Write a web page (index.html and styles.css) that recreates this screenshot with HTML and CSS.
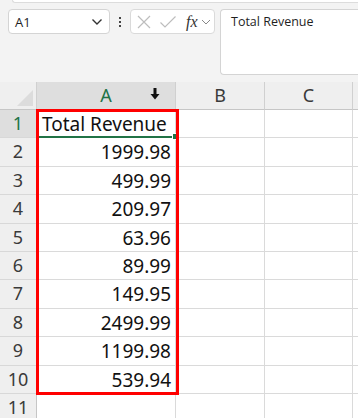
FILE: index.html
```html
<!DOCTYPE html>
<html lang="en">
<head>
    <meta charset="UTF-8" />
    <title>Sheet</title>
    <link rel="stylesheet" href="styles.css">
</head>
<body>

<div class="ribbon-edge"></div>

<div class="formula-bar">
    <div class="name-box">
        <span>A1</span>
        <svg width="12" height="8" viewBox="0 0 12 8"><path d="M1.5 1.5 L6 6 L10.5 1.5" fill="none" stroke="#333" stroke-width="1.4"/></svg>
    </div>
    <div class="dots"><i></i><i></i><i></i></div>
    <div class="fx-box">
        <svg width="16" height="16" viewBox="0 0 16 16"><path d="M2 2 L14 14 M14 2 L2 14" stroke="#bdbdbd" stroke-width="1.2"/></svg>
        <svg width="18" height="16" viewBox="0 0 18 16"><path d="M1.5 8.5 L6 13 L16.5 2.5" fill="none" stroke="#bdbdbd" stroke-width="1.2"/></svg>
        <span class="fx">fx</span>
        <svg width="10" height="6" viewBox="0 0 10 6"><path d="M1 1 L5 5 L9 1" fill="none" stroke="#888" stroke-width="1"/></svg>
    </div>
    <div class="formula-input">Total Revenue</div>
</div>

<div class="sheet">
    <div class="grid">
        <div class="corner"></div>
        <div class="col-head selected">A
            <svg class="col-arrow" width="10" height="12" viewBox="0 0 10 12"><path d="M3.5 0 H6.5 V6 H9.5 L5 11.5 L0.5 6 H3.5 Z" fill="#111"/></svg>
        </div>
        <div class="col-head">B</div>
        <div class="col-head">C</div>
        <div class="col-head tail"></div>
    </div>
    <div class="grid rows" id="rows"></div>
    <div class="selection"></div>
</div>

<script>
    const values = ["Total Revenue", "1999.98", "499.99", "209.97", "63.96", "89.99", "149.95", "2499.99", "1199.98", "539.94", ""];
    const rows = document.getElementById("rows");

    values.forEach((val, i) => {
        const head = document.createElement("div");
        head.className = "row-head" + (i === 0 ? " selected" : "");
        head.textContent = i + 1;
        rows.appendChild(head);

        const a = document.createElement("div");
        a.className = "cell" + (i === 0 ? " active text" : " num");
        a.textContent = val;
        rows.appendChild(a);

        for (let k = 0; k < 3; k++) {
            const c = document.createElement("div");
            c.className = "cell" + (k === 2 ? " tail" : "");
            rows.appendChild(c);
        }
    });
</script>

</body>
</html>
```

FILE: styles.css
```css
body {
    margin: 0;
    width: 358px;
    height: 418px;
    overflow: hidden;
    background: #f3f3f3;
    font-family: "Open Sans", "Noto Sans", sans-serif;
    position: relative;
}

.ribbon-edge {
    margin-left: 12px;
    height: 2px;
    background: #fff;
    border-bottom: 1px solid #dcdcdc;
    border-left: 1px solid #dcdcdc;
    border-bottom-left-radius: 4px;
}

.formula-bar {
    display: flex;
    align-items: flex-start;
    padding: 6px 0 0 8px;
    height: 74px;
    box-sizing: border-box;
}

.name-box {
    width: 102px;
    height: 25px;
    box-sizing: border-box;
    background: #fff;
    border: 1px solid #d4d4d4;
    border-radius: 4px;
    display: flex;
    align-items: center;
    justify-content: space-between;
    padding: 0 6px 0 6px;
    font-size: 13px;
    color: #1f1f1f;
}

.dots {
    width: 20px;
    height: 25px;
    display: flex;
    flex-direction: column;
    align-items: center;
    justify-content: center;
    gap: 2px;
}
.dots i {
    width: 2px;
    height: 2px;
    background: #444;
}

.fx-box {
    width: 85px;
    height: 25px;
    box-sizing: border-box;
    background: #fff;
    border: 1px solid #dadada;
    border-radius: 4px;
    display: flex;
    align-items: center;
    gap: 7px;
    padding-left: 5px;
}
.fx {
    font-family: "Liberation Serif", serif;
    font-style: italic;
    font-size: 16px;
    color: #333;
    margin-left: 2px;
    margin-right: -4px;
}

.formula-input {
    margin-left: 5px;
    flex: 1;
    height: 66px;
    box-sizing: border-box;
    background: #fff;
    border: 1px solid #d4d4d4;
    border-right: none;
    border-radius: 4px 0 0 4px;
    padding: 3px 10px;
    font-size: 12.5px;
    color: #1f1f1f;
}

.sheet {
    position: relative;
    margin-top: 5px;
    font-family: "Noto Sans", sans-serif;
}

.grid {
    display: grid;
    grid-template-columns: 37px 139px 89px 88px 5px;
}
.grid.rows {
    grid-auto-rows: 28.4px;
    background: #fff;
}

.corner {
    height: 28px;
    background: #efefef;
    border-right: 1px solid #d0d0d0;
    border-bottom: 1px solid #c6c6c6;
    box-sizing: border-box;
    position: relative;
}
.corner::after {
    content: "";
    position: absolute;
    right: 3px;
    bottom: 3px;
    border-left: 16px solid transparent;
    border-bottom: 16px solid #dcdcdc;
}

.col-head {
    height: 28px;
    box-sizing: border-box;
    background: #efefef;
    border-right: 1px solid #d0d0d0;
    border-bottom: 1px solid #c6c6c6;
    text-align: center;
    font-size: 18px;
    line-height: 27px;
    color: #3a3a3a;
    position: relative;
}
.col-head.selected {
    background: #dedede;
    color: #217346;
}
.col-head.tail {
    border-right: none;
}
.col-arrow {
    position: absolute;
    top: 6px;
    right: 15px;
}

.row-head {
    box-sizing: border-box;
    background: #efefef;
    border-right: 1px solid #c6c6c6;
    border-bottom: 1px solid #d8d8d8;
    text-align: center;
    font-size: 18px;
    line-height: 27px;
    color: #3a3a3a;
}
.row-head.selected {
    background: #dedede;
    color: #217346;
}

.cell {
    box-sizing: border-box;
    border-right: 1px solid #dadada;
    border-bottom: 1px solid #dadada;
    font-size: 19px;
    line-height: 29px;
    color: #111;
    white-space: nowrap;
}
.cell.tail {
    border-right: none;
}
.cell.num {
    text-align: right;
    padding-right: 4px;
}
.cell.text {
    padding-left: 5px;
}
.cell.active {
    position: relative;
    border-bottom: 2px solid #217346;
}
.cell.active::after {
    content: "";
    position: absolute;
    right: -4px;
    bottom: -4px;
    width: 5px;
    height: 5px;
    background: #217346;
    border: 1px solid #fff;
}

.selection {
    position: absolute;
    left: 36px;
    top: 27px;
    width: 143px;
    height: 286px;
    box-sizing: border-box;
    border: 3px solid #ff0000;
    pointer-events: none;
}
```
